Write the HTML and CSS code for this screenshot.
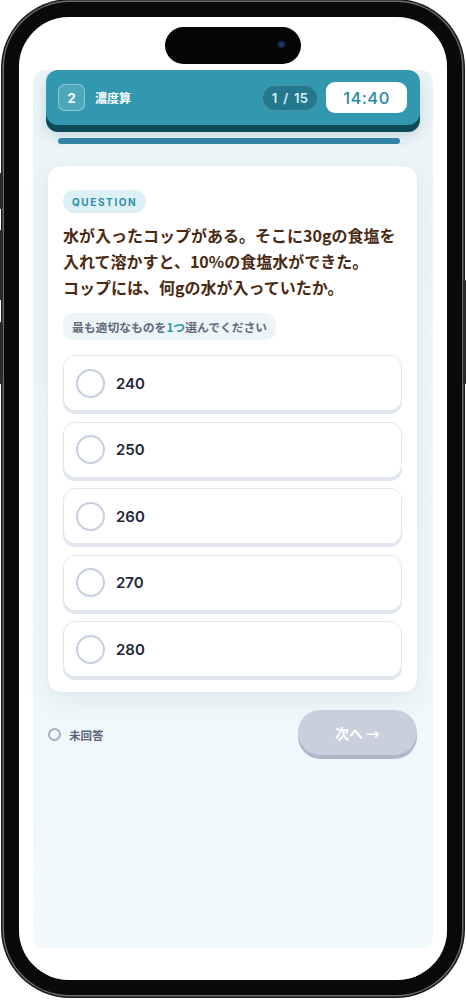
FILE: index.html
```html
<!DOCTYPE html>
<html lang="ja">
<head>
<meta charset="utf-8">
<title>濃度算</title>
<link rel="stylesheet" href="styles.css">
</head>
<body>
<div class="phone">
  <span class="side side-l1"></span>
  <span class="side side-l2"></span>
  <span class="side side-l3"></span>
  <span class="side side-r1"></span>
  <div class="screen">
    <div class="island"><span class="cam"></span></div>
    <div class="app">
      <header class="topbar">
        <div class="topbar-left">
          <span class="num-badge">2</span>
          <span class="title">濃度算</span>
        </div>
        <div class="topbar-right">
          <span class="count-pill">1 / 15</span>
          <span class="timer">14:40</span>
        </div>
      </header>
      <div class="progress"><div class="progress-fill" style="width:97.7%"></div></div>
      <section class="card">
        <span class="q-chip">QUESTION</span>
        <p class="q-text">水が入ったコップがある。そこに30gの食塩を<br>入れて溶かすと、10%の食塩水ができた。<br>コップには、何gの水が入っていたか。</p>
        <span class="hint">最も適切なものを<em>1つ</em>選んでください</span>
        <ul class="options">
          <li class="option"><span class="radio"></span><span class="opt-label">240</span></li>
          <li class="option"><span class="radio"></span><span class="opt-label">250</span></li>
          <li class="option"><span class="radio"></span><span class="opt-label">260</span></li>
          <li class="option"><span class="radio"></span><span class="opt-label">270</span></li>
          <li class="option"><span class="radio"></span><span class="opt-label">280</span></li>
        </ul>
      </section>
      <footer class="foot">
        <div class="status"><span class="status-dot"></span><span>未回答</span></div>
        <button class="next" type="button">次へ →</button>
      </footer>
    </div>
  </div>
</div>
</body>
</html>
```

FILE: styles.css
```css
* { box-sizing: border-box; }
html, body { margin: 0; padding: 0; background: #ffffff; }
body {
  width: 466px;
  height: 1000px;
  overflow: hidden;
  font-family: "Noto Sans CJK JP", "Noto Sans", sans-serif;
}
.phone {
  position: relative;
  margin: 2px 0 0 4px;
  width: 458px;
  height: 993px;
  border: 15px solid #0a0a0a;
  border-radius: 66px;
  box-shadow: 0 0 0 1.5px #6b6b6b, 0 0 0 3px #1a1a1a, inset 0 0 0 1px #2b2b2b;
  background: #ffffff;
}
.side {
  position: absolute;
  width: 4px;
  background: #2a2a2a;
  border-radius: 2px;
}
.side-l1 { left: -20px; top: 156px; height: 36px; }
.side-l2 { left: -20px; top: 213px; height: 70px; }
.side-l3 { left: -20px; top: 305px; height: 62px; }
.side-r1 { right: -20px; top: 263px; height: 104px; }
.screen {
  position: relative;
  height: 100%;
  border-radius: 50px;
  background: #ffffff;
  padding: 53px 14px 0 14px;
  overflow: hidden;
}
.island {
  position: absolute;
  top: 10px;
  left: 50%;
  margin-left: -68px;
  width: 136px;
  height: 37px;
  border-radius: 19px;
  background: #050505;
}
.cam {
  position: absolute;
  right: 15px;
  top: 13px;
  width: 9px;
  height: 9px;
  border-radius: 50%;
  background: radial-gradient(circle, #1d3a66 0 30%, #0b0f18 60%);
}
.app {
  height: 878px;
  border-radius: 12px;
  background: linear-gradient(180deg, #eaf4f7 0%, #eef7fa 40%, #f1f9fc 100%);
  padding: 0 13px;
  display: flex;
  flex-direction: column;
}
.topbar {
  height: 55px;
  border-radius: 12px;
  background: #3198b0;
  box-shadow: 0 7px 0 #0d4a58, 0 10px 14px rgba(13, 74, 88, 0.18);
  display: flex;
  align-items: center;
  justify-content: space-between;
  padding: 0 13px 0 12px;
  color: #ffffff;
}
.topbar-left { display: flex; align-items: center; gap: 10px; }
.num-badge {
  width: 27px;
  height: 27px;
  border-radius: 7px;
  border: 1px solid rgba(255, 255, 255, 0.38);
  background: rgba(255, 255, 255, 0.14);
  display: flex;
  align-items: center;
  justify-content: center;
  font-family: "Inter", "Noto Sans", sans-serif;
  font-weight: 700;
  font-size: 13px;
}
.title { font-weight: 700; font-size: 12px; }
.topbar-right { display: flex; align-items: center; gap: 8px; }
.count-pill {
  width: 56px;
  height: 26px;
  border-radius: 13px;
  background: #24788e;
  border: 1px solid rgba(255, 255, 255, 0.18);
  display: flex;
  align-items: center;
  justify-content: center;
  font-family: "Inter", "Noto Sans", sans-serif;
  font-weight: 600;
  font-size: 13px;
  word-spacing: 2px;
  letter-spacing: 0.3px;
  color: #dcf0f4;
}
.timer {
  width: 81px;
  height: 31px;
  border-radius: 9px;
  background: #ffffff;
  display: flex;
  align-items: center;
  justify-content: center;
  font-family: "Inter", "Noto Sans", sans-serif;
  font-weight: 500;
  font-size: 16.5px;
  color: #2a8aa4;
  letter-spacing: 0.5px;
}
.progress {
  margin: 13px 12px 0 12px;
  height: 6px;
  border-radius: 3px;
  background: #e9eef6;
  box-shadow: inset 0 0 0 1px #dde5ef;
}
.progress-fill {
  height: 100%;
  border-radius: 3px;
  background: #3383a4;
}
.card {
  margin: 21px 2px 0 1px;
  background: #ffffff;
  border: 1px solid #e2ebf2;
  border-radius: 14px;
  box-shadow: 0 10px 24px rgba(40, 100, 120, 0.08);
  padding: 24px 15px 15px 15px;
  display: flex;
  flex-direction: column;
  align-items: flex-start;
}
.q-chip {
  height: 23px;
  padding: 0 9px;
  border-radius: 12px;
  background: #dcf0f5;
  color: #2f8ea6;
  font-family: "Inter", "Noto Sans", sans-serif;
  font-weight: 700;
  font-size: 10px;
  letter-spacing: 1.6px;
  display: flex;
  align-items: center;
}
.q-text {
  margin: 9px 0 0 0;
  font-size: 16px;
  line-height: 26px;
  font-weight: 700;
  color: #4a2a12;
  white-space: nowrap;
}
.hint {
  margin-top: 13px;
  height: 27px;
  padding: 0 9px;
  border-radius: 10px;
  background: #eef5f9;
  color: #5f6b7b;
  font-weight: 700;
  font-size: 11.8px;
  display: flex;
  align-items: center;
}
.hint em { font-style: normal; color: #2e93b3; }
.options {
  list-style: none;
  margin: 15px 0 0 0;
  padding: 0;
  width: 100%;
  display: flex;
  flex-direction: column;
  gap: 10.5px;
}
.option {
  height: 56px;
  border: 1px solid #e2e6f0;
  border-radius: 12px;
  background: #ffffff;
  box-shadow: 0 3px 0 #e2e6ef;
  display: flex;
  align-items: center;
  gap: 11px;
  padding: 0 12px;
}
.radio {
  width: 29px;
  height: 29px;
  border-radius: 50%;
  border: 2px solid #c6cee0;
  background: #ffffff;
  flex: none;
}
.opt-label {
  font-family: "Inter", "Noto Sans", sans-serif;
  font-weight: 600;
  font-size: 15px;
  color: #23263a;
}
.foot {
  margin-top: 17px;
  padding: 0 3px 0 2px;
  display: flex;
  align-items: center;
  justify-content: space-between;
}
.status {
  display: flex;
  align-items: center;
  gap: 8px;
  color: #5d6678;
  font-weight: 700;
  font-size: 11.5px;
}
.status-dot {
  width: 13px;
  height: 13px;
  border-radius: 50%;
  border: 2px solid #a4aec5;
}
.next {
  width: 119px;
  height: 45px;
  margin-bottom: 4px;
  border: none;
  border-radius: 23px;
  background: #c9cfdc;
  box-shadow: 0 4px 0 #aeb6c7;
  color: #ffffff;
  font-family: "Noto Sans CJK JP", "Noto Sans", sans-serif;
  font-weight: 700;
  font-size: 14px;
}
```
